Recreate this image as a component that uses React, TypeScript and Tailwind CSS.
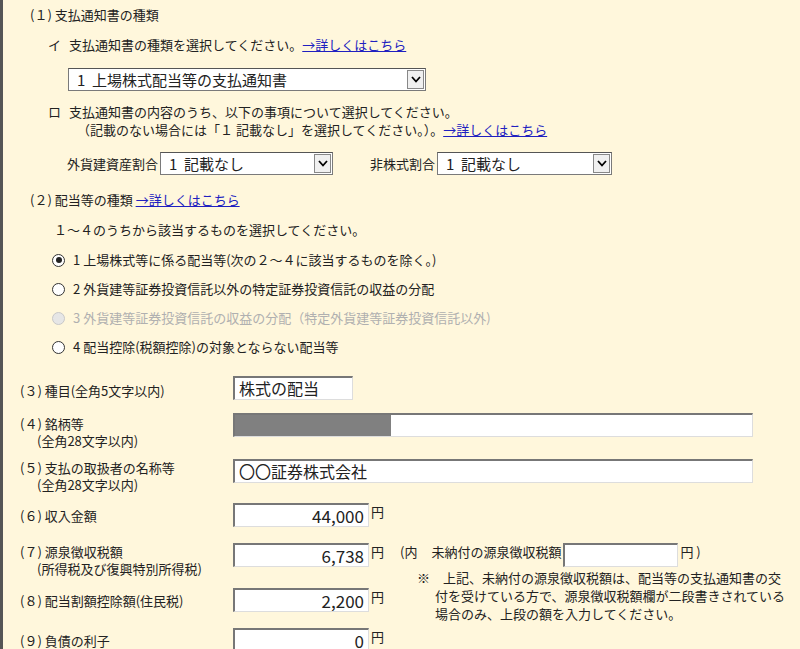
import React from "react";

const Sel = ({ w, text }: { w: string; text: string }) => (
  <div className={`${w} h-[23px] bg-white border border-[#7a7a7a] border-t-[#555] flex items-center justify-between pl-[8px] pr-[1px] text-[15px]`}>
    <span className="whitespace-pre">{text}</span>
    <span className="w-[17px] h-[19px] border border-[#888] bg-[#f0f0f0] flex items-center justify-center">
      <svg width="10" height="7" viewBox="0 0 10 7"><path d="M1 1 L5 5.5 L9 1" stroke="#000" strokeWidth="1.8" fill="none" /></svg>
    </span>
  </div>
);

const Radio = ({ checked, disabled }: { checked?: boolean; disabled?: boolean }) => (
  <span className={`w-[13px] h-[13px] rounded-full border ${disabled ? "border-[#c8c8c8] bg-[#e6e6e6]" : "border-[#333] bg-white"} flex items-center justify-center`}>
    {checked && <span className="w-[6px] h-[6px] rounded-full bg-[#222]" />}
  </span>
);

const Input = ({ w, text, right, children }: { w: string; text?: string; right?: boolean; children?: React.ReactNode }) => (
  <div className={`${w} h-[24px] bg-white border-t-2 border-l-2 border-[#777] border-b border-r border-b-[#ddd] border-r-[#ddd] flex items-center ${right ? "justify-end pr-1 text-[17px]" : "pl-1 text-[16px]"} overflow-hidden relative`}>
    {children}
    {text}
  </div>
);

const Link = ({ children }: { children: React.ReactNode }) => (
  <a className="underline text-[#2020c0]">{children}</a>
);

export default function App() {
  return (
    <div className="w-[800px] h-[649px] bg-[#fff7dc] border-l-[3px] border-[#555] text-[13px] text-[#222] overflow-hidden" style={{ fontFamily: '"Noto Sans CJK JP", "Noto Sans", sans-serif' }}>
      <div className="pl-[27px] pt-[6px] leading-[18px]">
        <div>(１) 支払通知書の種類</div>
        <div className="mt-[12px] pl-[18px] flex gap-[8px]"><span>イ</span><span>支払通知書の種類を選択してください。<Link>→詳しくはこちら</Link></span></div>
        <div className="mt-[14px] pl-[38px]"><Sel w="w-[358px]" text="1  上場株式配当等の支払通知書" /></div>
        <div className="mt-[12px] pl-[18px] flex gap-[8px]"><span>ロ</span><div><div>支払通知書の内容のうち、以下の事項について選択してください。</div><div className="pl-[8px]">（記載のない場合には「１ 記載なし」を選択してください。）。<Link>→詳しくはこちら</Link></div></div></div>
        <div className="mt-[13px] pl-[37px] flex items-center">
          <span className="mr-[2px]">外貨建資産割合</span><Sel w="w-[173px]" text="1  記載なし" />
          <span className="ml-[37px] mr-[2px]">非株式割合</span><Sel w="w-[175px]" text="1  記載なし" />
        </div>
        <div className="mt-[16px]">(２) 配当等の種類 <Link>→詳しくはこちら</Link></div>
        <div className="mt-[12px] pl-[24px]">１～４のうちから該当するものを選択してください。</div>
        <div className="mt-[12px] pl-[22px] flex flex-col gap-[11px]">
          <div className="flex items-center gap-[8px]"><Radio checked /><span>1 上場株式等に係る配当等(次の２～４に該当するものを除く。)</span></div>
          <div className="flex items-center gap-[8px]"><Radio /><span>2 外貨建等証券投資信託以外の特定証券投資信託の収益の分配</span></div>
          <div className="flex items-center gap-[8px] text-[#b0b0b0]"><Radio disabled /><span>3 外貨建等証券投資信託の収益の分配（特定外貨建等証券投資信託以外)</span></div>
          <div className="flex items-center gap-[8px]"><Radio /><span>4 配当控除(税額控除)の対象とならない配当等</span></div>
        </div>
      </div>
      <div className="pl-[17px] mt-[20px] leading-[17px]">
        <div className="flex h-[37px]"><div className="w-[213px] pt-[6px]">(３) 種目(全角5文字以内)</div><Input w="w-[120px]" text="株式の配当" /></div>
        <div className="flex h-[46px]"><div className="w-[213px] pt-[2px]">(４) 銘柄等<div className="pl-[17px]">(全角28文字以内)</div></div>
          <Input w="w-[520px]"><span className="absolute left-0 top-0 bottom-0 w-[156px] bg-[#808080]" /></Input></div>
        <div className="flex h-[44px]"><div className="w-[213px]">(５) 支払の取扱者の名称等<div className="pl-[17px]">(全角28文字以内)</div></div><Input w="w-[520px]" text="〇〇証券株式会社" /></div>
        <div className="flex h-[40px]"><div className="w-[213px] pt-[4px]">(６) 収入金額</div><Input w="w-[136px]" right text="44,000" /><span className="ml-[2px]">円</span></div>
        <div className="flex h-[45px]"><div className="w-[213px]">(７) 源泉徴収税額<div className="pl-[17px]">(所得税及び復興特別所得税)</div></div>
          <Input w="w-[136px]" right text="6,738" /><span className="ml-[2px]">円</span>
          <div className="ml-[16px] relative">
            <div className="flex items-start"><span className="mr-[6px]">(内</span><span className="ml-[8px] mr-[2px]">未納付の源泉徴収税額</span><Input w="w-[115px]" /><span className="ml-[2px]">円 )</span></div>
            <div className="absolute left-[17px] top-[26px] w-[400px] leading-[18px] whitespace-nowrap">※　上記、未納付の源泉徴収税額は、配当等の支払通知書の交<div className="pl-[18px]">付を受けている方で、源泉徴収税額欄が二段書きされている<br />場合のみ、上段の額を入力してください。</div></div>
          </div>
        </div>
        <div className="flex h-[40px]"><div className="w-[213px] pt-[4px]">(８) 配当割額控除額(住民税)</div><Input w="w-[136px]" right text="2,200" /><span className="ml-[2px]">円</span></div>
        <div className="flex h-[40px]"><div className="w-[213px] pt-[4px]">(９) 負債の利子</div><Input w="w-[136px]" right text="0" /><span className="ml-[2px]">円</span></div>
      </div>
    </div>
  );
}
